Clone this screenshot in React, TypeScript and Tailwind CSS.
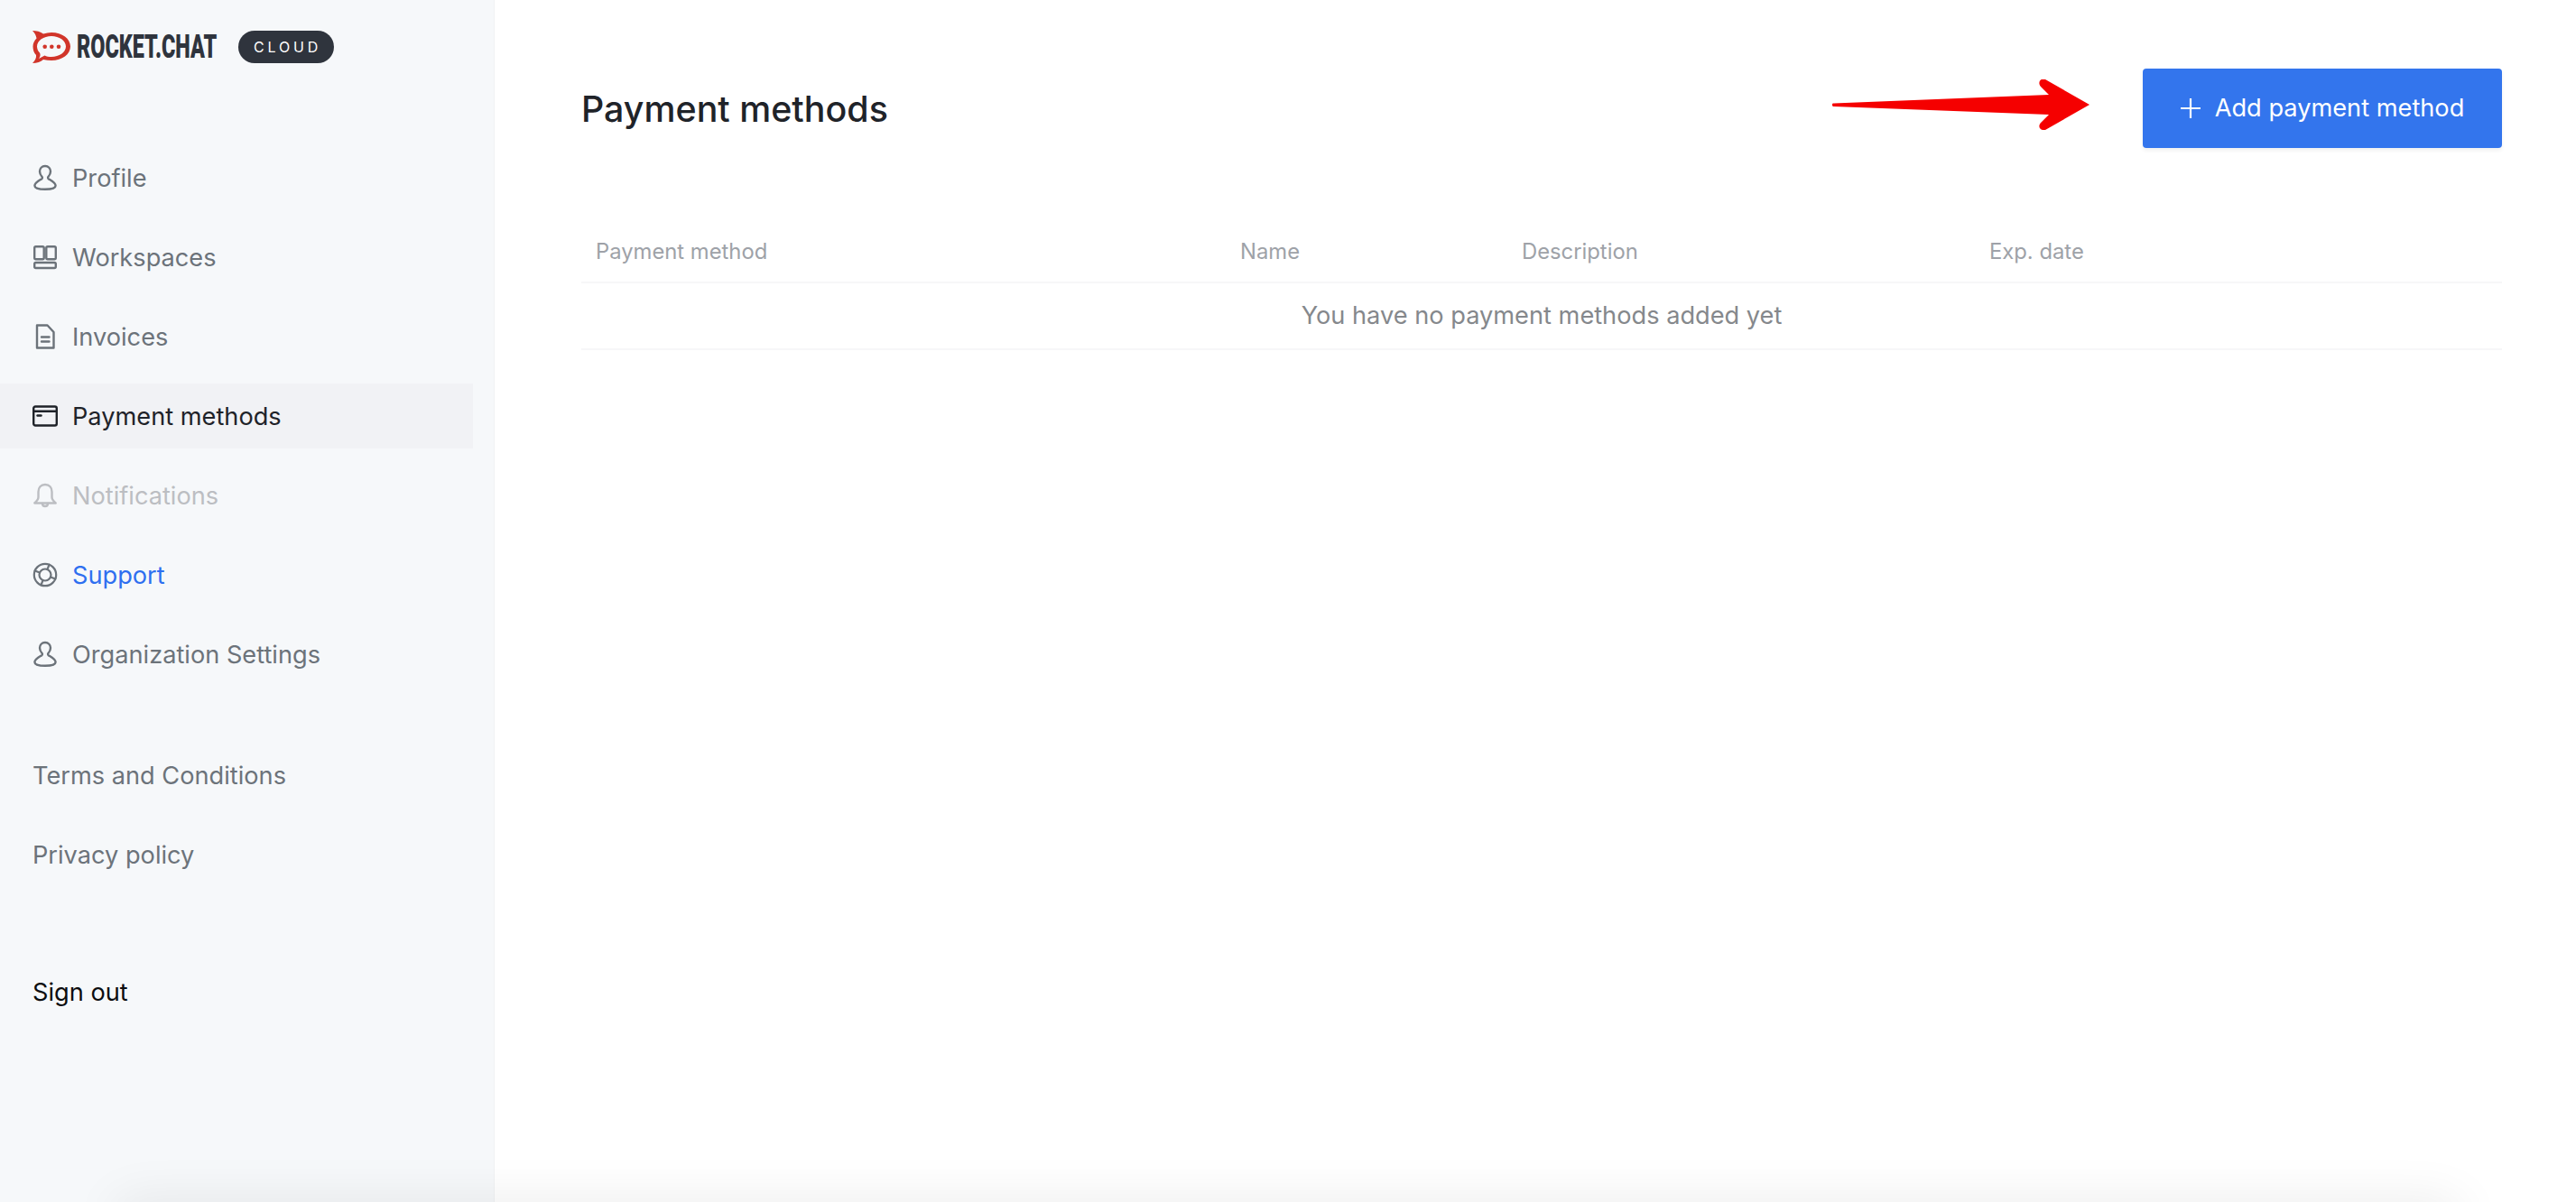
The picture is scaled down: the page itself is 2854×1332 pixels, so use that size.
import React from "react";

const stroke = { fill: "none", stroke: "currentColor", strokeWidth: 2.4, strokeLinejoin: "round" as const, strokeLinecap: "round" as const };

function Person() {
  return (
    <svg width="28" height="30" viewBox="0 0 28 30" {...stroke} className="shrink-0">
      <path d="M14 2c-3.600 0-6 2.700-6 6 0 2.600 1.200 4.400 2.600 6 .6.800.3 1.800-.6 2.400-2.600 1.600-7.600 4-7.600 7.400 0 3 5 4 11.600 4s11.600-1 11.600-4c0-3.400-5-5.800-7.600-7.400-.9-.6-1.200-1.600-.6-2.400 1.400-1.600 2.600-3.400 2.600-6 0-3.300-2.400-6-6-6z" />
    </svg>
  );
}
function Workspaces() {
  return (
    <svg width="28" height="28" viewBox="0 0 28 28" {...stroke} className="shrink-0">
      <rect x="2.200" y="2.200" width="10.500" height="14" rx="1.500" />
      <rect x="15.300" y="2.200" width="10.500" height="14" rx="1.500" />
      <rect x="2.200" y="20" width="23.600" height="6" rx="1.500" />
    </svg>
  );
}
function Doc() {
  return (
    <svg width="28" height="30" viewBox="0 0 28 30" {...stroke} className="shrink-0">
      <path d="M5 2.500h11.500L23.500 10v17.500H5z" />
      <path d="M10 15.500h8.500M10 20.500h8.500" />
    </svg>
  );
}
function Card() {
  return (
    <svg width="28" height="24" viewBox="0 0 28 24" {...stroke} className="shrink-0">
      <rect x="1.200" y="1.500" width="25.600" height="21" rx="2" />
      <path d="M1.200 6.800h25.600" />
      <path d="M5.500 11.500h4" />
    </svg>
  );
}
function Bell() {
  return (
    <svg width="28" height="28" viewBox="0 0 28 28" {...stroke} className="shrink-0">
      <path d="M14 2c-4.800 0-7.500 3.600-7.500 8v6c0 2.500-2 4.500-4.200 6.500h23.400c-2.200-2-4.200-4-4.200-6.500v-6c0-4.400-2.700-8-7.500-8z" />
      <path d="M11 23c0 2 1.300 3 3 3s3-1 3-3" />
    </svg>
  );
}
function Support() {
  return (
    <svg width="28" height="28" viewBox="0 0 28 28" {...stroke} strokeWidth={2.2} className="shrink-0">
      <circle cx="14" cy="14" r="12.200" />
      <circle cx="14" cy="14" r="6.500" />
      <path d="M14 1.800v5.700M14 20.500v5.700M1.800 14h5.700M20.500 14h5.700" transform="rotate(22 14 14)" />
    </svg>
  );
}

function Logo() {
  return (
    <svg width="42" height="37" viewBox="0 0 42 37" className="shrink-0">
      <path
        fillRule="evenodd"
        fill="#d1352a"
        d="M0 1C4 1 9 2 12 4.500 15 3.500 18 3 21 3c12 0 21 7 21 15.500S33 34 21 34c-3 0-6-.5-9-1-3 2.500-7 4-12 4 3-3 4.500-6 4-9C1.500 25.500.5 22 .5 18.500.5 15 2 12 4.500 9.500 4 6.500 2.500 3.500 0 1zM21 7c8.500 0 16 5 16 11.500S29.500 30 21 30c-3 0-5.500-.5-7.500-1.500L7 32c1.800-2.500 2-4.800 1-6.500-2-2-3-4.500-3-7C5 12 12.500 7 21 7z"
      />
      <circle cx="13.700" cy="18.700" r="2.300" fill="#d1352a" />
      <circle cx="21.300" cy="18.700" r="2.300" fill="#d1352a" />
      <circle cx="29" cy="18.700" r="2.300" fill="#d1352a" />
    </svg>
  );
}

function Arrow() {
  return (
    <svg width="285" height="56" viewBox="0 0 285 56" className="mb-[8px] shrink-0">
      <path d="M1 26.500 240 17l-9-9c-4-5 0-10 5-8l49 28-49 28c-5 1-9-3-5-8l9-9L1 30c-1.500-1-1.500-3 0-3.500z" fill="#f50000" />
    </svg>
  );
}

function NavRow({ icon, label, cls }: { icon: React.ReactNode; label: string; cls: string }) {
  return (
    <div className={`flex h-[72px] w-[524px] items-center gap-[16px] pl-[36px] text-[27.2px] ${cls}`}>
      {icon}
      <span className="pt-[3px]">{label}</span>
    </div>
  );
}

export default function App() {
  return (
    <div className="relative flex h-screen w-full overflow-hidden bg-white font-['Inter',sans-serif]">
      <aside className="flex w-[548px] shrink-0 flex-col border-r border-[#f0f1f3] bg-[#f6f8fa] pt-[33px]">
        <div className="flex h-[37px] items-center pl-[36px]">
          <Logo />
          <div className="ml-[7px] w-[155px] shrink-0">
            <span className="inline-block origin-left scale-x-[0.65] whitespace-nowrap font-['Roboto',sans-serif] text-[36px] leading-none font-black text-[#2f343d]">
              ROCKET.CHAT
            </span>
          </div>
          <div className="ml-[24px] flex h-[36px] w-[106px] items-center justify-center rounded-full bg-[#2f343d] pl-[3px] text-[16px] tracking-[3.800px] text-white">
            CLOUD
          </div>
        </div>

        <nav className="mt-[91px] flex flex-col gap-[16px]">
          <NavRow icon={<Person />} label="Profile" cls="text-[#6c737a]" />
          <NavRow icon={<Workspaces />} label="Workspaces" cls="text-[#6c737a]" />
          <NavRow icon={<Doc />} label="Invoices" cls="text-[#6c737a]" />
          <NavRow icon={<Card />} label="Payment methods" cls="bg-[#f1f2f5] text-[#1f2329]" />
          <NavRow icon={<Bell />} label="Notifications" cls="text-[#bcbec2]" />
          <div className="flex h-[72px] w-[524px] items-center gap-[16px] pl-[36px] text-[27.2px] text-[#2e6ff0]">
            <span className="text-[#6c737a]"><Support /></span>
            <span className="pt-[3px]">Support</span>
          </div>
          <NavRow icon={<Person />} label="Organization Settings" cls="text-[#6c737a]" />
        </nav>

        <div className="mt-[62px] flex flex-col gap-[16px] pl-[36px] text-[27.2px] text-[#6c737a]">
          <div className="flex h-[72px] items-center pt-[3px]">Terms and Conditions</div>
          <div className="flex h-[72px] items-center pt-[3px]">Privacy policy</div>
        </div>

        <div className="mt-[81px] flex h-[72px] items-center pl-[36px] text-[27.2px] text-[#0c0d0f]">Sign out</div>
      </aside>

      <main className="min-w-0 flex-1 pt-[76px] pr-[82px] pl-[96px]">
        <div className="flex h-[88px] items-center justify-between">
          <h1 className="pt-[4px] text-[39.4px] font-medium text-[#1f2329]">Payment methods</h1>
          <div className="flex items-center gap-[59px]">
            <Arrow />
            <button className="flex h-[88px] w-[398px] items-center justify-center gap-[16px] rounded-[4px] bg-[#3375ed] text-[27.2px] text-white shadow-[0_3px_4px_rgba(0,0,0,0.06)]">
              <svg width="22" height="22" viewBox="0 0 22 22" fill="none" stroke="currentColor" strokeWidth="2.200" className="shrink-0">
                <path d="M11 0v22M0 11h22" />
              </svg>
              <span>Add payment method</span>
            </button>
          </div>
        </div>

        <div className="mt-[78px] grid h-[72px] grid-cols-[713px_312px_518px_1fr] items-center border-b-2 border-[#f7f7f8] pt-[3px] text-[23.8px] text-[#9ea2a8]">
          <div className="pl-[16px]">Payment method</div>
          <div className="pl-[17px]">Name</div>
          <div className="pl-[17px]">Description</div>
          <div className="pl-[17px]">Exp. date</div>
        </div>
        <div className="flex h-[74px] items-center justify-center border-b-2 border-[#f7f7f8] text-[27.2px] text-[#85888c]">
          You have no payment methods added yet
        </div>
      </main>

      <div className="absolute top-full right-[130px] left-[130px] h-[40px] shadow-[0_0_55px_rgba(0,0,0,0.09)]" />
    </div>
  );
}
